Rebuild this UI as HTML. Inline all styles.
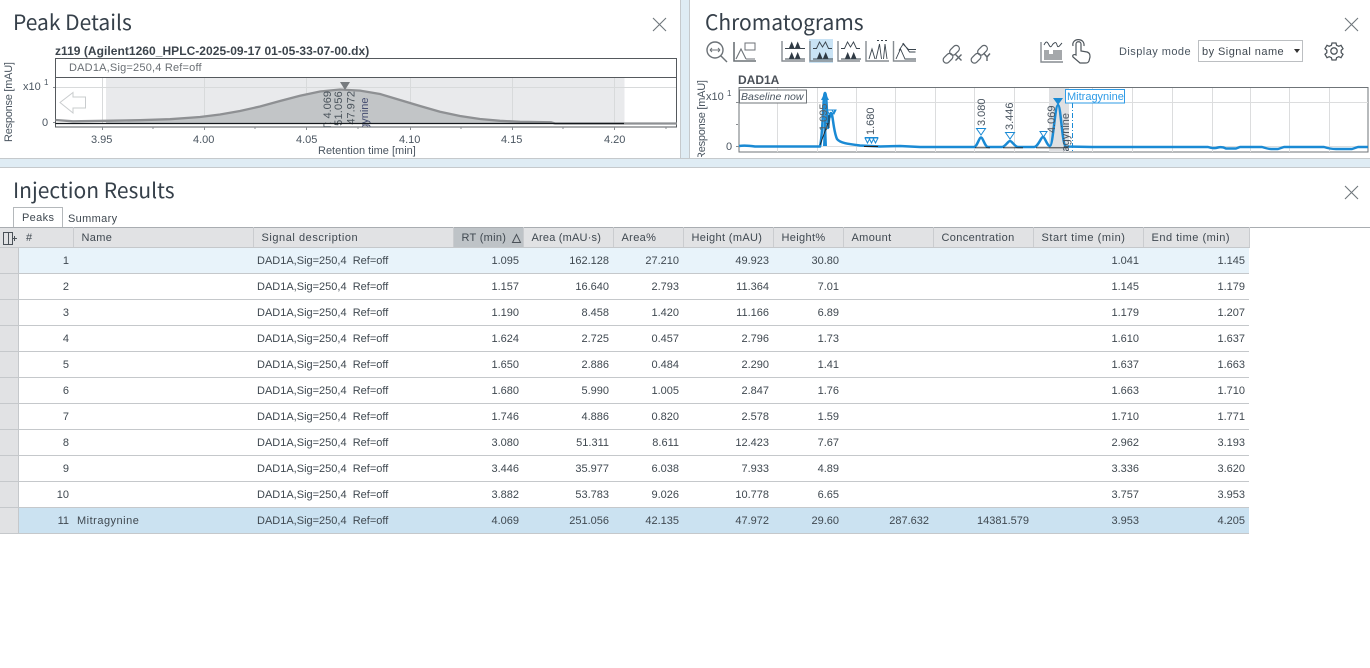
<!DOCTYPE html>
<html><head><meta charset="utf-8"><style>
html,body{margin:0;padding:0;width:1370px;height:668px;overflow:hidden;background:#fff;font-family:"Liberation Sans",sans-serif;color:#3f4850}
.a{position:absolute;white-space:pre}
.t{font-family:"Noto Sans CJK JP","Liberation Sans",sans-serif;font-size:21px;line-height:26px;color:#36404a}
table{position:absolute;left:0;top:227px;border-collapse:collapse;table-layout:fixed;width:1249px;font-size:11px;color:#3f4850}
th{height:20px;padding:0 0 0 8px;background:#e1e2e4;font-weight:normal;text-align:left;border-top:1px solid #a9adb1;border-bottom:1px solid #c5c8cb;border-right:1px solid #cacccf;white-space:pre;overflow:hidden;box-sizing:border-box;letter-spacing:.35px}
td{height:26px;padding:0 4px;box-sizing:border-box;text-align:right;border-bottom:1px solid #c5c8cb;white-space:pre;overflow:hidden}
td.l{text-align:left}
td.h{background:#e1e2e4;padding:0;border-right:1px solid #c5c8cb}
tr.s td:not(.h){background:#e8f3fa}
tr.m td:not(.h){background:#cbe2f1}
</style></head><body>

<div class="a" style="left:680px;top:0;width:1px;height:158px;background:#c5c9cc"></div>
<div class="a" style="left:681px;top:0;width:8px;height:158px;background:#dfecf4"></div>
<div class="a" style="left:689px;top:0;width:1px;height:158px;background:#c5c9cc"></div>
<div class="a" style="left:0;top:158px;width:1370px;height:10px;background:#dfecf4;border-top:1px solid #c5c9cc;border-bottom:1px solid #c5c9cc;box-sizing:border-box"></div>

<div class="a t" style="left:13px;top:9px">Peak Details</div>
<div class="a t" style="left:705px;top:9px">Chromatograms</div>
<div class="a t" style="left:13px;top:177px">Injection Results</div>

<svg class="a" style="left:0;top:0" width="1370" height="668" fill="none">
<defs>
<clipPath id="c1"><rect x="300" y="88" width="100" height="39"/></clipPath>
<clipPath id="c2"><rect x="739" y="88" width="629" height="64"/></clipPath>
<clipPath id="c3"><rect x="690" y="60" width="30" height="97"/></clipPath>
</defs>
<g stroke="#6f767c" stroke-width="1.1"><path d="M653 18l13 13M666 18l-13 13M1345 18l13 13M1358 18l-13 13M1345 186l13 13M1358 186l-13 13"/></g>

<!-- Peak details chart -->
<rect x="55.5" y="58.5" width="621" height="68.5" stroke="#55595d" fill="#fff"/>
<path d="M55.5 77.5H676.5" stroke="#55595d"/>
<rect x="106" y="78" width="518.5" height="46" fill="#e9eaec"/>
<path d="M56 87.5H676M102.500 78V124M204.500 78V124M306.500 78V124M410.500 78V124M512.500 78V124M614.500 78V124" stroke="#d8dadb"/>
<path d="M106 120.800 L140 120.200 L170 119.200 L200 117 L220 114.500 L240 111 L260 106.500 L280 101 L300 95.800 L320 91.500 L340 89.500 L360 90.600 L380 94 L400 100 L420 106 L440 111.700 L460 116 L480 119 L500 120.800 L520 121.800 L551 122.300 L555 123.500 L106 124Z" fill="#c2c5c7"/>
<path d="M55.500 120 L73 121.300 L106 120.800 L140 120.200 L170 119.200 L200 117 L220 114.500 L240 111 L260 106.500 L280 101 L300 95.800 L320 91.500 L340 89.500 L360 90.600 L380 94 L400 100 L420 106 L440 111.700 L460 116 L480 119 L500 120.800 L520 121.800 L551 122.300 L555 123.500 L677 123.500" stroke="#8e9093" stroke-width="2.300"/>
<path d="M340 82h10l-5 8z" fill="#777b7f"/>
<path d="M60 102.500L73 92.500V97H85.500V108H73V113Z" stroke="#c9ccce" fill="#fff"/>
<path d="M53 87.500h2M53 122.500h2M102.500 127v3M204.500 127v3M306.500 127v3M410.500 127v3M512.500 127v3M614.500 127v3M153 127v2M255 127v2M358 127v2M461 127v2M563 127v2M666 127v2" stroke="#888c90"/>
<g font-family="Liberation Sans" font-size="11" fill="#4a5560">
<g fill="#4b545c" clip-path="url(#c1)" text-anchor="end">
<text transform="translate(331 91) rotate(-90)">RT: 4.069</text>
<text transform="translate(342 91) rotate(-90)" letter-spacing=".2">251.056</text>
<text transform="translate(354.500 91) rotate(-90)">47.972</text>
<text transform="translate(368 97.500) rotate(-90)" fill="#454d70">Mitragynine</text>
</g>
<text x="23" y="90">x10</text><text x="44" y="85" font-size="8">1</text><text x="42" y="126">0</text>
<text x="91" y="143">3.95</text><text x="193" y="143">4.00</text><text x="296" y="143">4.05</text><text x="399" y="143">4.10</text><text x="501" y="143">4.15</text><text x="604" y="143">4.20</text>
<text x="318" y="154" font-size="11">Retention time [min]</text>
<text transform="translate(12 142) rotate(-90)" font-size="11" textLength="80">Response [mAU]</text>
<text x="69" y="71" fill="#6a6f74" font-size="11" letter-spacing=".2">DAD1A,Sig=250,4  Ref=off</text>
<text x="55" y="55" font-weight="bold" font-size="12" letter-spacing=".04" fill="#3c444c">z119 (Agilent1260_HPLC-2025-09-17 01-05-33-07-00.dx)</text>
</g>
<path d="M55.500 123.500H624" stroke="#14181c" stroke-width="1.300"/>

<!-- Chromatogram -->
<rect x="739" y="87.500" width="629" height="64.500" stroke="#6f7478" fill="#fff"/>
<rect x="1049" y="88" width="20" height="64" fill="#dfe0e2"/>
<path d="M739 102.500H1368M739 146.500H1368M777.500 88V152M817.500 88V152M856.500 88V152M895.500 88V152M935.500 88V152M974.500 88V152M1014.500 88V152M1092.500 88V152M1132.500 88V152M1172.500 88V152M1212.500 88V152M1250.500 88V152M1289.500 88V152M1329.500 88V152" stroke="#dcddde"/>
<path d="M736 102.500h3M736 146.500h3M736 124.500h2" stroke="#888c90"/>
<path d="M739 146 Q745 145 755 146.500 L820 146.500 C823 135 823 93 825 93 C827 93 827 125 828 128 C829 118 830 113 831 113 C833 113 833 130 837 139 C840 143 848 144 860 145.500 L880 146.500 L900 146 L920 147 L974 147 C977 147 979 137.500 981 137.500 C983 137.500 985 147 988 147 L1002 147 C1005 147 1008 141 1010 141 C1012 141 1015 147 1018 147 L1034 147 C1038 147 1041 137 1043 137 C1045 137 1047 146 1050 146 C1053 146 1055 105 1058 105 C1061 105 1062 146 1066 146.500 L1092 147 L1208 147 Q1213 149 1218 147.500 Q1222 146.500 1226 148.500 L1236 148.500 L1240 147 L1262 147 Q1268 149 1272 149 L1278 149 L1284 147 L1324 147 Q1330 149 1336 149 L1352 149 L1358 147 L1368 147" stroke="#1a8ad4" stroke-width="2.500" stroke-linejoin="round" clip-path="url(#c2)"/>
<path d="M823 146L825 93 827 146z" fill="#1a8ad4"/>
<path d="M825 92l-4 8h8z" fill="#1a8ad4"/>
<path d="M820 145L828 123M829 115V128M864 146.500h14M975 147.800h15M1003 147.800h20M1036 147.800h14M1048 147.800h20" stroke="#222" stroke-width=".9"/>
<path d="M827 110h8l-4 7zM832 110h4l-2 4zM865 138h5l-2.500 5zM869 138h5l-2.500 5zM873 138h5l-2.500 5zM865 137.500h13M976.500 128.500h9l-4.500 6.500zM1005.500 132.500h9l-4.500 6.500zM1040 131.500h7l-3.500 5.500z" stroke="#1a8ad4"/>
<path d="M1053 98h10l-5 7z" fill="#1a8ad4"/>
<path d="M1072.500 103V152" stroke="#1a8ad4" stroke-dasharray="5 2 1 2"/>
<rect x="739.500" y="90" width="67" height="13" stroke="#6f7478" fill="#fff"/>
<rect x="1065.500" y="89.500" width="59" height="13.500" stroke="#2e9be6" fill="#fff"/>
<g font-family="Liberation Sans" font-size="11" fill="#4a5560">
<text x="741" y="100" font-style="italic" font-size="10.500">Baseline now</text>
<text x="1067" y="100" fill="#2e9be6" font-size="11">Mitragynine</text>
<text transform="translate(827 131) rotate(-90)" fill="#5a5f62">1.095</text>
<text transform="translate(874 135) rotate(-90)">1.680</text>
<text transform="translate(985 126) rotate(-90)">3.080</text>
<text transform="translate(1013 130) rotate(-90)">3.446</text>
<text transform="translate(1055 133) rotate(-90)">4.069</text>
<g clip-path="url(#c2)"><text transform="translate(1069 113) rotate(-90)" text-anchor="end">Mitragynine</text></g>
<text x="706" y="100">x10</text><text x="727" y="96" font-size="8">1</text><text x="726" y="150">0</text>
<g clip-path="url(#c3)"><text transform="translate(705 160) rotate(-90)" textLength="80">Response [mAU]</text></g>
<text x="738" y="84" font-weight="bold" font-size="12" fill="#4a5058">DAD1A</text>
<text x="1119" y="55" letter-spacing=".45">Display mode</text>
<text x="1202" y="55" letter-spacing=".45" fill="#3f4850">by Signal name</text>
</g>

<!-- Toolbar -->
<rect x="809" y="39" width="24" height="24" fill="#c9e3f5"/>
<g stroke="#6c7277" stroke-width="1.400">
<circle cx="715" cy="50" r="8"/><path d="M721 56l6 6"/><path d="M710 50h10M710 50l2-2M710 50l2 2M720 50l-2-2M720 50l-2 2" stroke-width="1"/>
<path d="M734 42V61H756" stroke-width="1.600"/><path d="M736 59l5-10 5 10M746 59h9" stroke-width="1.100"/><rect x="745" y="43" width="10" height="7" stroke-width="1"/>
<path d="M782 41V61H805M810 41V61H833M838 41V61H860M866 41V61H889M893.500 41V61H916" stroke-width="1.400" stroke="#868c91"/>
</g>
<g fill="#2f3a44">
<path d="M789 48l2.700-6.500 2.700 6.500zM795 48l2.700-6.500 2.700 6.500zM789 58.500l2.700-6.500 2.700 6.500zM795 58.500l2.700-6.500 2.700 6.500z"/>
<path d="M817 58.500l2.700-6.500 2.700 6.500zM823 58.500l2.700-6.500 2.700 6.500z"/>
<path d="M845 58.500l2.700-6.500 2.700 6.500zM851 58.500l2.700-6.500 2.700 6.500z"/>
</g>
<g stroke="#3a444d" stroke-width=".9">
<path d="M785 48.500h20M785 59h20M813 59h20M841 59h20"/>
<path d="M813 48.500h3.500l3-6.500 3 5 3-5 3 6.500h3.500M841 48.500h3.500l3-6.500 3 5 3-5 3 6.500h3.500"/>
<path d="M869 59l3-10 3 10M876 59l3.500-15 2 15M883.500 59l1.500-15 2 15M877 40.500h2M881 40.500h2M885 40.500h2"/>
<path d="M896 59l4.500-10 4.500 10h11M899 50.500l4.500-7 6 8.500h6M902.500 43.500l6 6h7.500"/>
<path d="M1044 45c2-4 3-4 5 0s3 0 4-1 3-3 4 1 3 0 5-2"/>
</g>
<path d="M1041 42v20h22" stroke="#868c91" stroke-width="1.400"/>
<path d="M1044 60v-10h5v4h4v-4h9v10z" fill="#a5a8ab"/>
<g stroke="#5f666c" stroke-width="1.200">
<rect x="942.500" y="55" width="11" height="6.500" rx="3.200" transform="rotate(-45 948 58.200)"/>
<rect x="949" y="47" width="11" height="6.500" rx="3.200" transform="rotate(-45 954.500 50.200)"/>
<rect x="970.500" y="55" width="11" height="6.500" rx="3.200" transform="rotate(-45 976 58.200)"/>
<rect x="977" y="47" width="11" height="6.500" rx="3.200" transform="rotate(-45 982.500 50.200)"/>
<path d="M955.500 54.500l6 6M961.500 54.500l-6 6M984 53.500l3 3.500 3-3.500M987 57v4" stroke-width="1.400"/>
<path d="M1076 55V44c0-3 5-3 5 0v7l6 1c3 1 3 3 3 5l-1 4c-1 2-2 2-4 2h-5l-7-6c-1-2 1-3 3-2zM1073 46c-2-8 12-9 11 0" stroke="#4f565c"/>
</g>
<rect x="1198.500" y="40.500" width="104" height="21" stroke="#bcbfc2"/>
<path d="M1294 49h6l-3 4z" fill="#333"/>
<g stroke="#4f565c" stroke-width="1.300">
<circle cx="1334" cy="51" r="3.200"/>
<path d="M1332 43h4l.6 2.300 2.200 1 2.200-1 2 3.400-1.800 1.600v2.400l1.800 1.600-2 3.400-2.200-1-2.200 1-.6 2.300h-4l-.6-2.300-2.200-1-2.200 1-2-3.400 1.800-1.600v-2.400l-1.800-1.600 2-3.400 2.200 1 2.200-1z"/>
</g>

<!-- Tabs -->
<path d="M0 227.500H1370" stroke="#a9adb1"/>
<path d="M13.500 228V207.500H62.500V228" stroke="#b4b8bb" fill="#fff"/>
<path d="M14 227.500H62" stroke="#fff"/>
</svg>
<div class="a" style="left:22px;top:212px;font-size:11px;letter-spacing:.35px">Peaks</div>
<div class="a" style="left:68px;top:213px;font-size:11px;letter-spacing:.35px">Summary</div>

<table>
<colgroup><col style="width:18px"><col style="width:55px"><col style="width:180px"><col style="width:200px"><col style="width:70px"><col style="width:90px"><col style="width:70px"><col style="width:90px"><col style="width:70px"><col style="width:90px"><col style="width:100px"><col style="width:110px"><col style="width:106px"></colgroup>
<tr><th style="padding:0;border-right:0"></th><th>#</th><th>Name</th><th style="letter-spacing:.55px">Signal description</th><th style="background:#bec3c7;letter-spacing:.3px">RT (min)</th><th style="letter-spacing:.2px">Area (mAU·s)</th><th>Area%</th><th>Height (mAU)</th><th>Height%</th><th>Amount</th><th>Concentration</th><th style="letter-spacing:.55px">Start time (min)</th><th style="letter-spacing:.5px">End time (min)</th></tr>
<tr class="s"><td class="h"></td><td>1</td><td class="l"></td><td class="l">DAD1A,Sig=250,4  Ref=off</td><td>1.095</td><td>162.128</td><td>27.210</td><td>49.923</td><td>30.80</td><td></td><td></td><td>1.041</td><td>1.145</td></tr>
<tr><td class="h"></td><td>2</td><td class="l"></td><td class="l">DAD1A,Sig=250,4  Ref=off</td><td>1.157</td><td>16.640</td><td>2.793</td><td>11.364</td><td>7.01</td><td></td><td></td><td>1.145</td><td>1.179</td></tr>
<tr><td class="h"></td><td>3</td><td class="l"></td><td class="l">DAD1A,Sig=250,4  Ref=off</td><td>1.190</td><td>8.458</td><td>1.420</td><td>11.166</td><td>6.89</td><td></td><td></td><td>1.179</td><td>1.207</td></tr>
<tr><td class="h"></td><td>4</td><td class="l"></td><td class="l">DAD1A,Sig=250,4  Ref=off</td><td>1.624</td><td>2.725</td><td>0.457</td><td>2.796</td><td>1.73</td><td></td><td></td><td>1.610</td><td>1.637</td></tr>
<tr><td class="h"></td><td>5</td><td class="l"></td><td class="l">DAD1A,Sig=250,4  Ref=off</td><td>1.650</td><td>2.886</td><td>0.484</td><td>2.290</td><td>1.41</td><td></td><td></td><td>1.637</td><td>1.663</td></tr>
<tr><td class="h"></td><td>6</td><td class="l"></td><td class="l">DAD1A,Sig=250,4  Ref=off</td><td>1.680</td><td>5.990</td><td>1.005</td><td>2.847</td><td>1.76</td><td></td><td></td><td>1.663</td><td>1.710</td></tr>
<tr><td class="h"></td><td>7</td><td class="l"></td><td class="l">DAD1A,Sig=250,4  Ref=off</td><td>1.746</td><td>4.886</td><td>0.820</td><td>2.578</td><td>1.59</td><td></td><td></td><td>1.710</td><td>1.771</td></tr>
<tr><td class="h"></td><td>8</td><td class="l"></td><td class="l">DAD1A,Sig=250,4  Ref=off</td><td>3.080</td><td>51.311</td><td>8.611</td><td>12.423</td><td>7.67</td><td></td><td></td><td>2.962</td><td>3.193</td></tr>
<tr><td class="h"></td><td>9</td><td class="l"></td><td class="l">DAD1A,Sig=250,4  Ref=off</td><td>3.446</td><td>35.977</td><td>6.038</td><td>7.933</td><td>4.89</td><td></td><td></td><td>3.336</td><td>3.620</td></tr>
<tr><td class="h"></td><td>10</td><td class="l"></td><td class="l">DAD1A,Sig=250,4  Ref=off</td><td>3.882</td><td>53.783</td><td>9.026</td><td>10.778</td><td>6.65</td><td></td><td></td><td>3.757</td><td>3.953</td></tr>
<tr class="m"><td class="h"></td><td>11</td><td class="l" style="letter-spacing:.5px">Mitragynine</td><td class="l">DAD1A,Sig=250,4  Ref=off</td><td>4.069</td><td>251.056</td><td>42.135</td><td>47.972</td><td>29.60</td><td>287.632</td><td>14381.579</td><td>3.953</td><td>4.205</td></tr>
</table>
<svg class="a" style="left:0;top:228px" width="530" height="20" fill="none" stroke="#4a5158">
<path d="M3.500 4.500h9v12h-9zM8.500 4.500v12M12 10.500h5M14.500 8v5"/>
<path d="M512.500 14.500l4-8 4 8z"/>
</svg>
</body></html>
